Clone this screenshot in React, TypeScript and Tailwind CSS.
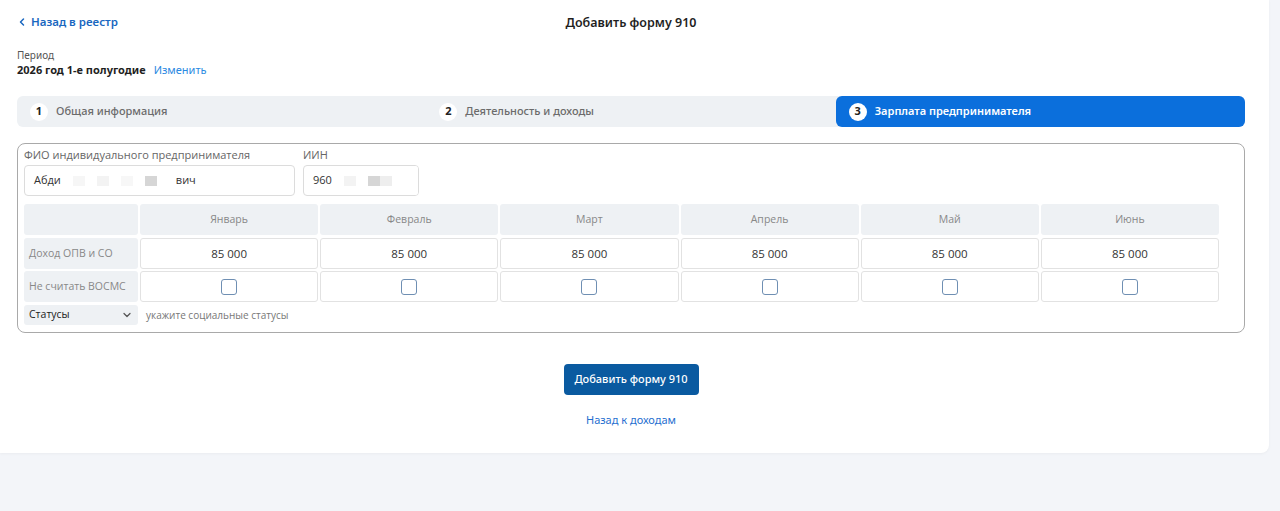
import { ChevronLeft, ChevronDown } from "lucide-react";

const months = ["Январь", "Февраль", "Март", "Апрель", "Май", "Июнь"];

const steps = [
  { n: 1, title: "Общая информация" },
  { n: 2, title: "Деятельность и доходы" },
  { n: 3, title: "Зарплата предпринимателя" },
];

function Redacted({ width, blocks }: { width: string; blocks: string[] }) {
  // pixelated blur blocks
  return (
    <span className={`inline-flex h-[30px] items-center bg-white ${width}`}>
      {blocks.map((c, i) => (
        <span key={i} className={`h-[10px] w-[12px] ${c}`} />
      ))}
    </span>
  );
}

export default function App() {
  return (
    <div
      className="min-h-screen bg-[#f3f5f9] text-[#1f1f1f]"
      style={{ fontFamily: '"Noto Sans", "Open Sans", sans-serif' }}
    >
      <div className="w-[1269px] rounded-br-lg bg-white pb-[24px] pl-[17px] pr-[24px] shadow-[0_1px_3px_rgba(0,0,0,0.04)]">
        {/* header */}
        <div className="relative flex h-[44px] items-center">
          <a className="flex items-center gap-[3px] text-[11.5px] font-semibold text-[#1967c0]">
            <ChevronLeft className="-ml-[1px] h-[12px] w-[12px]" strokeWidth={3} />
            Назад в реестр
          </a>
          <div className="absolute left-0 right-0 top-[14px] text-center text-[12.5px] font-semibold">
            Добавить форму 910
          </div>
        </div>

        <div className="pt-[5px]">
          <div className="text-[10px] leading-[12px] text-[#555]">Период</div>
          <div className="mt-[1px] flex items-baseline gap-[8px] text-[11px] leading-[16px]">
            <span className="font-bold">2026 год 1-е полугодие</span>
            <span className="text-[#2b8ae2]">Изменить</span>
          </div>
        </div>

        {/* stepper */}
        <div className="mt-[18px] flex h-[31px] rounded-[6px] bg-[#eef1f4]">
          {steps.map((s) => {
            const active = s.n === 3;
            return (
              <div
                key={s.n}
                className={`flex flex-1 items-center gap-[8px] pl-[13px] text-[11px] ${
                  active ? "rounded-[6px] bg-[#0b6fdc] font-semibold text-white" : "font-medium text-[#6b6b6b]"
                }`}
              >
                <span className="flex h-[18px] w-[18px] items-center justify-center rounded-full bg-white text-[11px] font-bold text-[#222]">
                  {s.n}
                </span>
                {s.title}
              </div>
            );
          })}
        </div>

        {/* form */}
        <div
          className="mt-[16px] rounded-[8px] border border-[#a9a9a9] px-[6px] pb-[7px] pt-[3px]"
          style={{ fontFamily: '"Open Sans", "Noto Sans", sans-serif' }}
        >
          <div className="flex gap-[8px]">
            <div className="w-[271px]">
              <div className="text-[11px] leading-[16px] text-[#666]">
                ФИО индивидуального предпринимателя
              </div>
              <div className="mt-[2px] flex h-[31px] items-center overflow-hidden rounded-[4px] border border-[#dcdcdc] pl-[9px] text-[11px] text-[#333]">
                Абди
                <Redacted
                  width="w-[115px]"
                  blocks={["bg-white", "bg-[#f6f6f6]", "bg-white", "bg-[#f3f3f3]", "bg-white", "bg-[#f7f7f7]", "bg-white", "bg-[#d6d6d6]", "bg-white"]}
                />
                вич
              </div>
            </div>
            <div className="w-[116px]">
              <div className="text-[11px] leading-[16px] text-[#666]">ИИН</div>
              <div className="mt-[2px] flex h-[31px] items-center overflow-hidden rounded-[4px] border border-[#dcdcdc] pl-[9px] text-[11px] text-[#333]">
                960
                <Redacted
                  width="w-[88px]"
                  blocks={["bg-white", "bg-[#f3f3f3]", "bg-white", "bg-[#d6d6d6]", "bg-[#eeeeee]", "bg-white"]}
                />
              </div>
            </div>
          </div>

          {/* table */}
          <div className="mt-[8px] grid w-[1195px] grid-cols-[114px_repeat(6,1fr)] gap-[2px] text-[10.5px]">
            <div className="h-[31px] rounded-[3px] bg-[#eef1f4]" />
            {months.map((m) => (
              <div
                key={m}
                className="flex h-[31px] items-center justify-center rounded-[3px] bg-[#eef1f4] text-[#888]"
              >
                {m}
              </div>
            ))}

            <div className="mt-[1px] flex h-[31px] items-center rounded-[3px] bg-[#eef1f4] pl-[5px] text-[#888]">
              Доход ОПВ и СО
            </div>
            {months.map((m) => (
              <div
                key={m}
                className="mt-[1px] flex h-[31px] items-center justify-center rounded-[3px] border border-[#e2e2e2] text-[11.5px] text-[#333]"
              >
                85 000
              </div>
            ))}

            <div className="flex h-[31px] items-center rounded-[3px] bg-[#eef1f4] pl-[5px] text-[#888]">
              Не считать ВОСМС
            </div>
            {months.map((m) => (
              <div
                key={m}
                className="flex h-[31px] items-center justify-center rounded-[3px] border border-[#e2e2e2]"
              >
                <span className="h-[16px] w-[16px] rounded-[3px] border-[1.5px] border-[#6f8fb3]" />
              </div>
            ))}
          </div>

          <div className="mt-[3px] flex items-center gap-[8px]">
            <div className="flex h-[20px] w-[114px] items-center justify-between rounded-[3px] bg-[#eef1f4] pl-[5px] pr-[5px] text-[10.5px] text-[#222]">
              Статусы
              <ChevronDown className="h-[12px] w-[12px] text-[#555]" strokeWidth={2.5} />
            </div>
            <span className="text-[10px] text-[#777]">укажите социальные статусы</span>
          </div>
        </div>

        {/* actions */}
        <div className="mt-[31px] flex flex-col items-center">
          <button className="h-[31px] w-[135px] rounded-[4px] bg-[#0a5aa0] text-[11px] font-medium text-white">
            Добавить форму 910
          </button>
          <a className="mt-[17px] text-[11px] text-[#1f6fd0]">Назад к доходам</a>
        </div>
      </div>
    </div>
  );
}
